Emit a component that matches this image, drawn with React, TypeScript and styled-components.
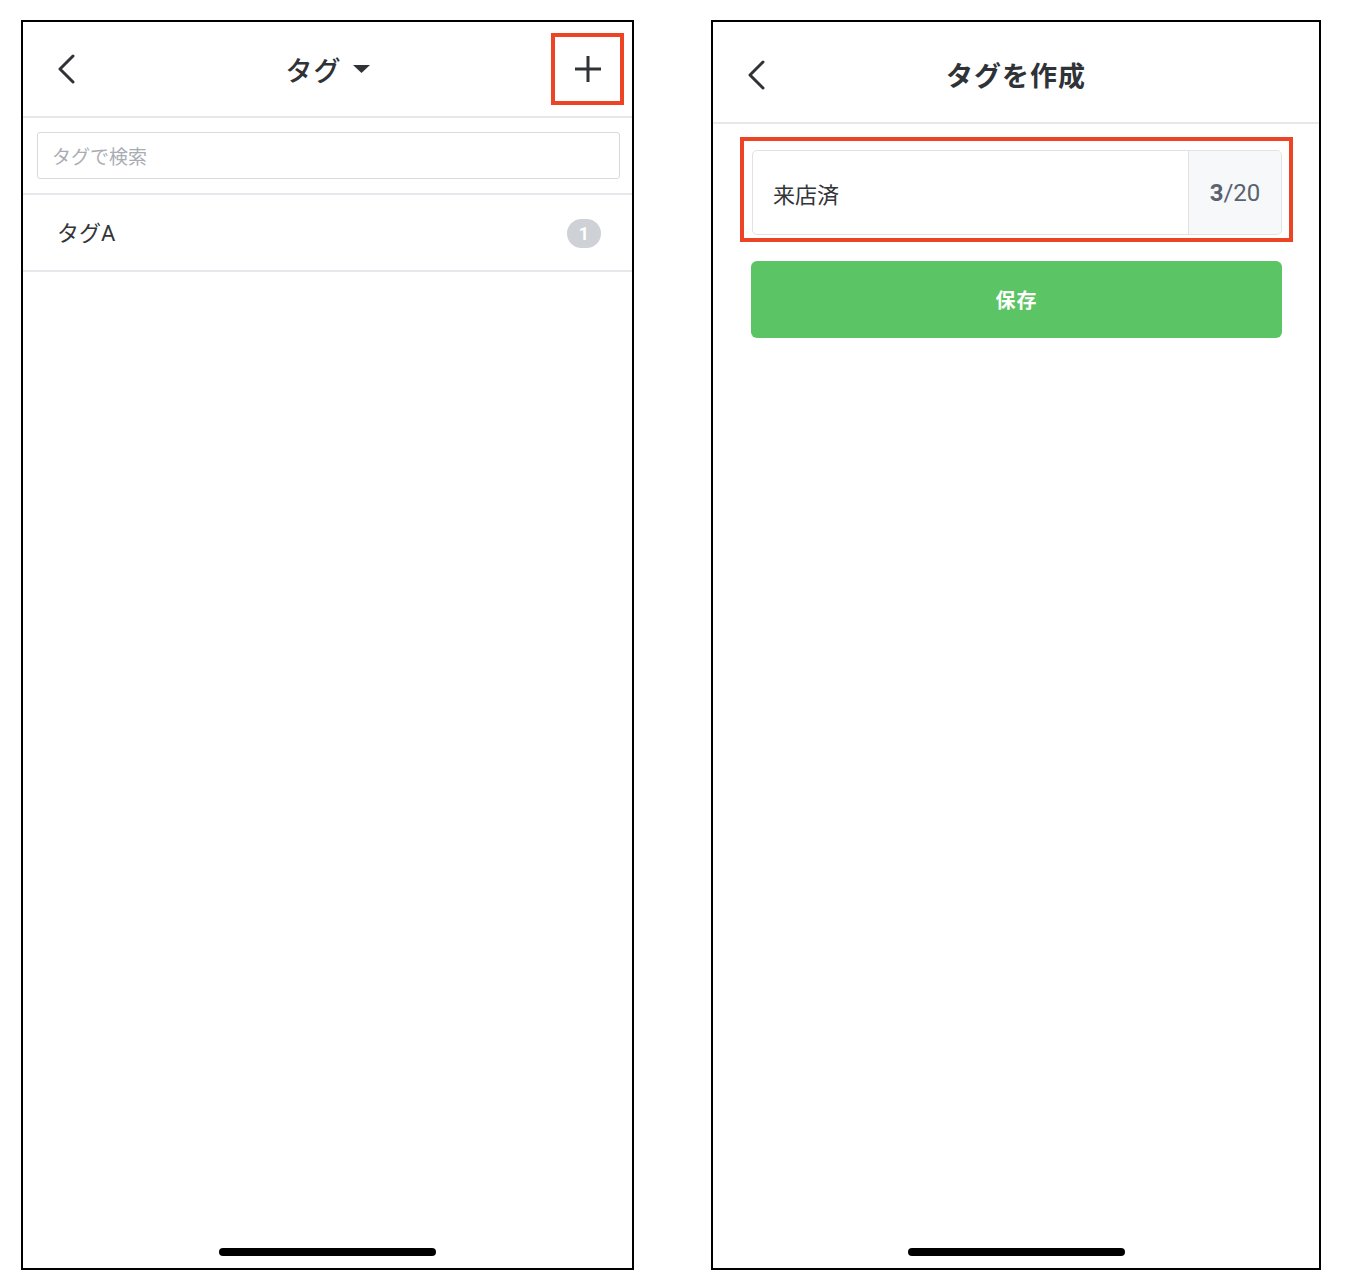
import styled, { createGlobalStyle } from "styled-components";

const GlobalStyle = createGlobalStyle`
  html, body {
    margin: 0;
    padding: 0;
    background: #ffffff;
  }
  body {
    font-family: Roboto, "Noto Sans CJK JP", sans-serif;
    color: #2f3236;
  }
`

const Page = styled.div`
  display: flex;
  flex-direction: row;
  align-items: flex-start;
  gap: 77px;
  padding: 20px 0 0 21px;
`

const Phone = styled.div<{ $width: number }>`
  width: ${(p) => p.$width}px;
  height: 1250px;
  box-sizing: border-box;
  border: 2px solid #000000;
  display: flex;
  flex-direction: column;
  background: #ffffff;
`

const Header = styled.div<{ $height: number; $padTop?: number }>`
  height: ${(p) => p.$height}px;
  box-sizing: border-box;
  display: grid;
  grid-template-columns: 1fr auto 1fr;
  align-items: center;
  padding: ${(p) => p.$padTop ?? 0}px 8px 0 8px;
  border-bottom: 2px solid #e6e8eb;
`

const BackButton = styled.div`
  justify-self: start;
  display: flex;
  align-items: center;
  padding-left: 26px;
`

const Title = styled.div<{ $bold?: boolean }>`
  display: flex;
  align-items: center;
  gap: 11px;
  font-size: 27px;
  font-weight: ${(p) => (p.$bold ? 700 : 500)};
  color: #2f3236;
  letter-spacing: 1px;
`

const AddButton = styled.div`
  justify-self: end;
  width: 73px;
  height: 72px;
  box-sizing: border-box;
  border: 4px solid #ee4426;
  display: flex;
  align-items: center;
  justify-content: center;
`

const SearchBar = styled.div`
  padding: 14px 12px 14px 14px;
  border-bottom: 2px solid #e6e8eb;
`

const SearchInput = styled.div`
  height: 47px;
  box-sizing: border-box;
  border: 1.5px solid #d6d9dd;
  border-radius: 3px;
  display: flex;
  align-items: center;
  padding-left: 14px;
  font-size: 19px;
  color: #a9adb3;
`

const TagRow = styled.div`
  height: 77px;
  box-sizing: border-box;
  display: flex;
  align-items: center;
  justify-content: space-between;
  padding: 0 31px 0 34px;
  border-bottom: 2px solid #e6e8eb;
  font-size: 22px;
  color: #333538;
`

const TagName = styled.span`
  margin-bottom: 4px;
`

const Badge = styled.span`
  width: 34px;
  height: 29px;
  margin-top: 2px;
  border-radius: 15px;
  background: #ced1d5;
  color: #ffffff;
  font-size: 18px;
  font-weight: 700;
  display: flex;
  align-items: center;
  justify-content: center;
`

const Spacer = styled.div`
  flex: 1;
`

const HomeIndicator = styled.div`
  align-self: center;
  width: 217px;
  height: 8px;
  border-radius: 4px;
  background: #000000;
  margin-bottom: 12px;
`

const Form = styled.div`
  padding: 13px 26px 0 27px;
`

const Highlight = styled.div`
  border: 4px solid #ee4426;
  padding: 9px 7px 3px 8px;
`

const Field = styled.div`
  height: 85px;
  box-sizing: border-box;
  border: 1.5px solid #e0e2e5;
  border-radius: 5px;
  display: flex;
  overflow: hidden;
`

const FieldText = styled.div`
  flex: 1;
  display: flex;
  align-items: center;
  padding-left: 20px;
  font-size: 22px;
  color: #333538;
`

const Counter = styled.div`
  width: 92px;
  display: flex;
  align-items: center;
  justify-content: center;
  background: #f7f8fa;
  border-left: 1.5px solid #dfe1e5;
  font-size: 24px;
  color: #5a6170;

  b {
    font-weight: 700;
  }
`

const SaveButton = styled.div`
  margin: 19px 11px 0 11px;
  height: 77px;
  border-radius: 6px;
  background: #5bc464;
  color: #ffffff;
  font-size: 20px;
  font-weight: 700;
  display: flex;
  align-items: center;
  justify-content: center;
  letter-spacing: 1px;
`

function Chevron() {
  return (
    <svg width="20" height="30" viewBox="0 0 20 30" fill="none">
      <path d="M16 2 L3 15 L16 28" stroke="#2f3236" strokeWidth="3" strokeLinecap="round" strokeLinejoin="round" />
    </svg>
  )
}

function Plus() {
  return (
    <svg width="28" height="28" viewBox="0 0 28 28" fill="none">
      <path d="M14 1 V27 M1 14 H27" stroke="#2f3236" strokeWidth="3" />
    </svg>
  )
}

function Caret() {
  return (
    <svg width="17" height="8" viewBox="0 0 17 8">
      <path d="M0 0 H17 L8.5 8 Z" fill="#2f3236" />
    </svg>
  )
}

export default function App() {
  return (
    <>
      <GlobalStyle />
      <Page>
        <Phone $width={613}>
          <Header $height={96}>
            <BackButton><Chevron /></BackButton>
            <Title>タグ<Caret /></Title>
            <AddButton><Plus /></AddButton>
          </Header>
          <SearchBar>
            <SearchInput>タグで検索</SearchInput>
          </SearchBar>
          <TagRow>
            <TagName>タグA</TagName>
            <Badge>1</Badge>
          </TagRow>
          <Spacer />
          <HomeIndicator />
        </Phone>

        <Phone $width={610}>
          <Header $height={102} $padTop={5}>
            <BackButton><Chevron /></BackButton>
            <Title $bold>タグを作成</Title>
            <span />
          </Header>
          <Form>
            <Highlight>
              <Field>
                <FieldText>来店済</FieldText>
                <Counter><span><b>3</b>/20</span></Counter>
              </Field>
            </Highlight>
            <SaveButton>保存</SaveButton>
          </Form>
          <Spacer />
          <HomeIndicator />
        </Phone>
      </Page>
    </>
  )
}
